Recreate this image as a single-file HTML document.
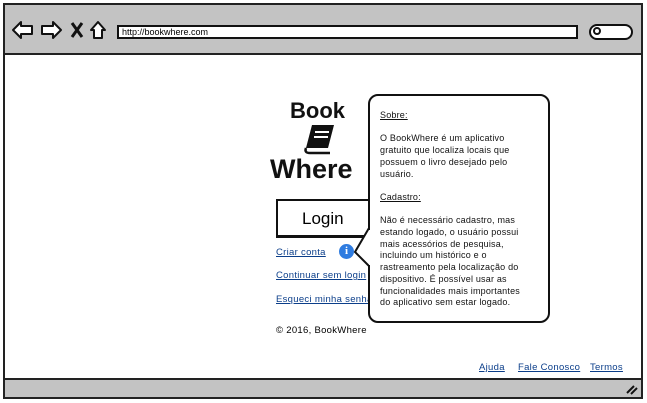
<!DOCTYPE html>
<html><head><meta charset="utf-8"><style>
*{margin:0;padding:0;box-sizing:border-box}
body{width:647px;height:403px;background:#fff;font-family:"Liberation Sans",sans-serif;position:relative;overflow:hidden}
.a{position:absolute}
.lnk{position:absolute;font-size:9.5px;color:#0b3e8a;text-decoration:underline;letter-spacing:0.3px}
.pop p{font-size:9px;line-height:11.7px;color:#111;letter-spacing:0.2px}
</style></head><body>
<div class="a" style="left:3px;top:3px;width:640px;height:396px;border:2px solid #222;background:#fff"></div>
<div class="a" style="left:5px;top:5px;width:636px;height:50px;background:#c3c3c3;border-bottom:2px solid #222"></div>
<div class="a" style="left:5px;top:378px;width:636px;height:19px;background:#c3c3c3;border-top:2px solid #222"></div>
<svg class="a" style="left:0;top:0" width="647" height="403">
<g fill="#fff" stroke="#111" stroke-width="2" stroke-linejoin="round">
<path d="M13 30 L21 22 L21 26 L32 26 L32 34 L21 34 L21 38 Z"/>
<path d="M61 30 L53 22 L53 26 L42 26 L42 34 L53 34 L53 38 Z"/>
<path d="M91 30 L98 22 L105 30 L102 30 L102 38 L94 38 L94 30 Z"/>
<rect x="590" y="25" width="42" height="14" rx="7"/>
</g>
<path d="M72 23 L82 37 M82 23 L72 37" stroke="#111" stroke-width="3"/>
<circle cx="597" cy="31" r="3" fill="none" stroke="#111" stroke-width="2"/>
<path d="M627 393 L634 386 M631 394 L637 388" stroke="#111" stroke-width="2"/>
</svg>
<div class="a" style="left:117px;top:25px;width:461px;height:14px;background:#fff;border:2px solid #111;font-size:9px;line-height:10px;padding-left:3px">http://bookwhere.com</div>
<div class="a" style="left:290px;top:98px;font-size:22px;font-weight:bold;color:#111">Book</div>
<svg class="a" style="left:302px;top:122px" width="36" height="34"><path d="M10 3 L32 3 L26 26 L4 26 Z" fill="#111"/><path d="M4 26 Q2 31 8 31 L28 31" fill="none" stroke="#111" stroke-width="2.5"/><path d="M13 10 L27 10 M12 15 L26 15" stroke="#fff" stroke-width="2"/></svg>
<div class="a" style="left:270px;top:154px;font-size:27px;font-weight:bold;color:#111">Where</div>
<div class="a" style="left:276px;top:199px;width:94px;height:39px;border:2px solid #111;border-bottom-width:3px;font-size:17px;padding:8px 0 0 24px">Login</div>
<div class="lnk" style="left:276px;top:247px">Criar conta</div>
<div class="lnk" style="left:276px;top:270px">Continuar sem login</div>
<div class="lnk" style="left:276px;top:294px">Esqueci minha senha</div>
<div class="a" style="left:276px;top:325px;font-size:9.5px;letter-spacing:0.3px">© 2016, BookWhere</div>
<div class="a" style="left:339px;top:244px;width:15px;height:15px;border-radius:50%;background:#2f7ce0;color:#fff;font-size:11px;font-weight:bold;text-align:center;line-height:15px;font-family:'Liberation Serif',serif">i</div>
<div class="a pop" style="left:368px;top:94px;width:182px;height:229px;border:2px solid #111;border-radius:10px;background:#fff;padding:14px 18px 0 10px">
<p style="text-decoration:underline">Sobre:</p><p>&nbsp;</p>
<p>O BookWhere é um aplicativo gratuito que localiza locais que possuem o livro desejado pelo usuário.</p><p>&nbsp;</p>
<p style="text-decoration:underline">Cadastro:</p><p>&nbsp;</p>
<p>Não é necessário cadastro, mas estando logado, o usuário possui mais acessórios de pesquisa, incluindo um histórico e o rastreamento pela localização do dispositivo. É possível usar as funcionalidades mais importantes do aplicativo sem estar logado.</p>
</div>
<svg class="a" style="left:352px;top:228px" width="20" height="40"><path d="M17 0 L3 24 L17 38" fill="#fff" stroke="#111" stroke-width="2"/><rect x="17" y="2" width="3" height="35" fill="#fff"/></svg>
<div class="lnk" style="left:479px;top:362px">Ajuda</div>
<div class="lnk" style="left:518px;top:362px">Fale Conosco</div>
<div class="lnk" style="left:590px;top:362px">Termos</div>
</body></html>
